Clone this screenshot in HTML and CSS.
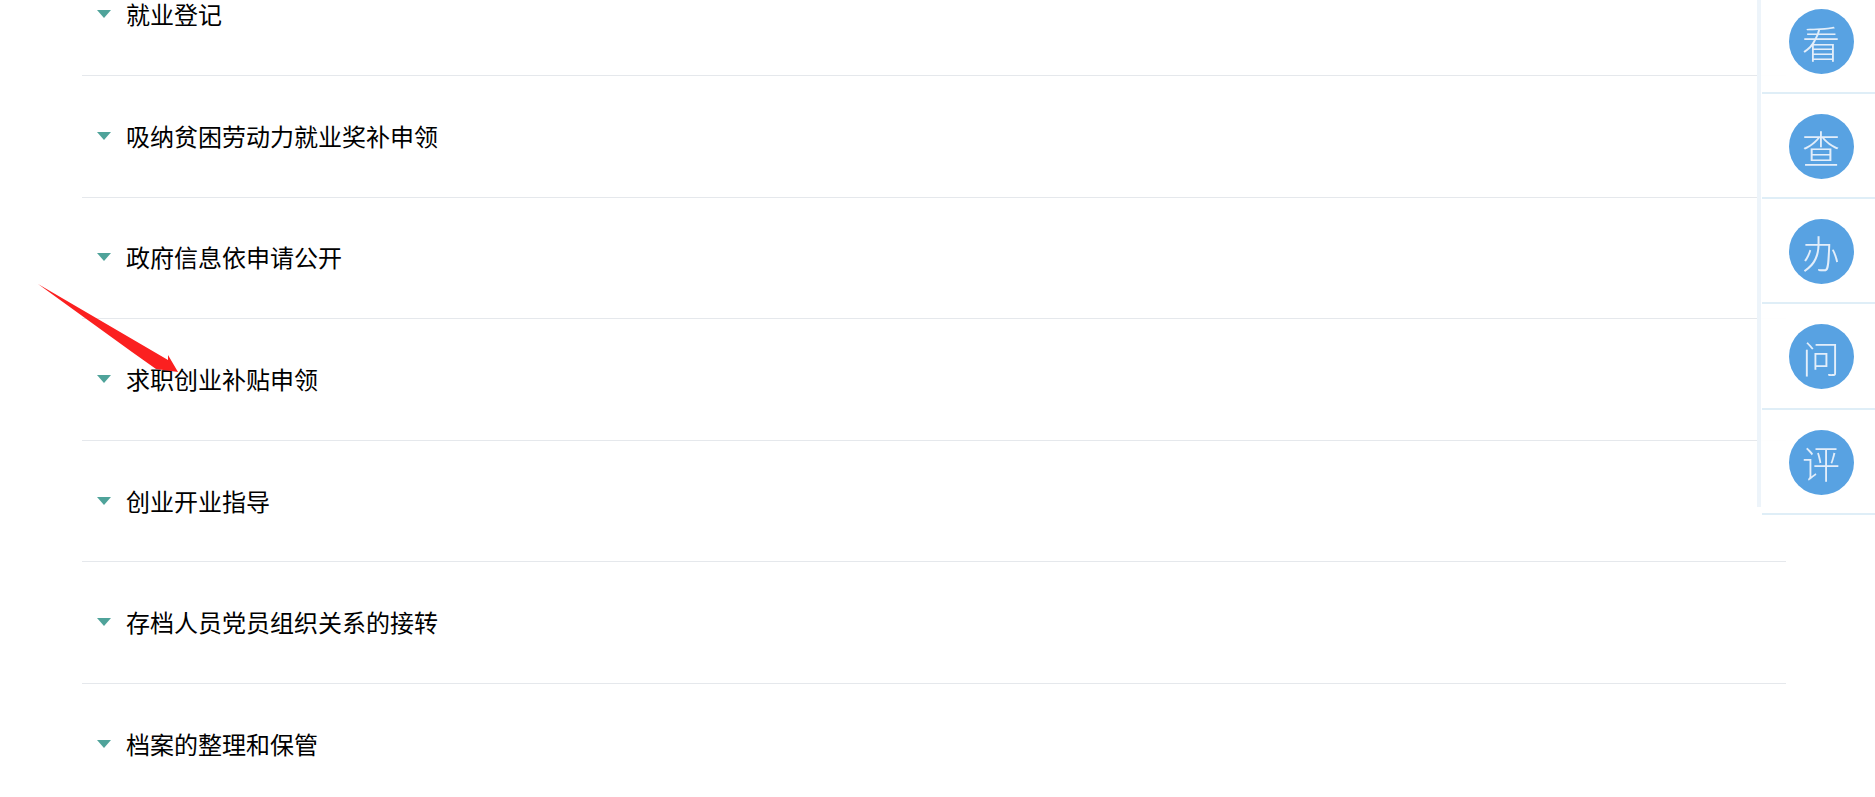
FILE: index.html
```html
<!DOCTYPE html>
<html>
  <head>
    <meta charset="UTF-8">
    <title>办事指南</title>
    <link rel="stylesheet" href="styles.css">
  </head>
  <body>
    <ul class="list">
      <li class="row"><span class="tri"></span><a href="#">就业登记</a></li>
      <li class="row"><span class="tri"></span><a href="#">吸纳贫困劳动力就业奖补申领</a></li>
      <li class="row"><span class="tri"></span><a href="#">政府信息依申请公开</a></li>
      <li class="row"><span class="tri"></span><a href="#">求职创业补贴申领</a></li>
      <li class="row"><span class="tri"></span><a href="#">创业开业指导</a></li>
      <li class="row"><span class="tri"></span><a href="#">存档人员党员组织关系的接转</a></li>
      <li class="row"><span class="tri"></span><a href="#">档案的整理和保管</a></li>
    </ul>

    <div class="side">
      <div class="side-item"><span class="ball">看</span></div>
      <div class="side-item"><span class="ball">查</span></div>
      <div class="side-item"><span class="ball">办</span></div>
      <div class="side-item"><span class="ball">问</span></div>
      <div class="side-item"><span class="ball">评</span></div>
    </div>

    <!-- annotation arrow -->
    <svg class="arrow" width="160" height="100" viewBox="0 0 160 100">
      <path d="M-2 -1 L128 75 L128 70 L138 87 L116 84 L92 67 Z" fill="#fb2020"/>
    </svg>
  </body>
</html>
```

FILE: styles.css
```css
html, body {
  height: 100%;
}
body {
  margin: 0;
  overflow: hidden;
  background: #fff;
  color: #000;
  font-family: "Noto Sans CJK SC", "Liberation Sans", sans-serif;
}
a {
  color: #000;
  text-decoration: none;
}

.list {
  list-style: none;
  margin: -45.6px 0 0 82px;
  padding: 0;
  width: 1704px;
}
.row {
  display: flex;
  align-items: center;
  box-sizing: border-box;
  height: 121.6px;
  padding: 0 0 2px 15px;
  border-bottom: 1px solid #e5e8ec;
  font-size: 24px;
}
.row:last-child {
  border-bottom: 0;
}
.tri {
  width: 0;
  height: 0;
  margin: 0 15px -1px 0;
  border-left: 7.5px solid transparent;
  border-right: 7.5px solid transparent;
  border-top: 8px solid #4fa39a;
}

.side {
  position: absolute;
  top: 0;
  right: 0;
  width: 114px;
  height: 507px;
  background: rgba(255, 255, 255, 0.95);
  border-left: 4px solid #edf4fa;
}
.side-item {
  display: flex;
  align-items: center;
  justify-content: center;
  box-sizing: border-box;
  height: 105.2px;
  margin-left: 1px;
  padding: 2px 0 0 5px;
  border-bottom: 2px solid #dfeef7;
}
.side-item:first-child {
  height: 94px;
  padding: 0 0 9px 5px;
}
.ball {
  display: flex;
  align-items: center;
  justify-content: center;
  width: 65px;
  height: 65px;
  border-radius: 50%;
  background: #58a2e2;
  color: #e3eefa;
  font-size: 38px;
  font-weight: 300;
  line-height: 1;
  filter: blur(0.4px);
}

.arrow {
  position: absolute;
  left: 40px;
  top: 285px;
  overflow: visible;
}
```
